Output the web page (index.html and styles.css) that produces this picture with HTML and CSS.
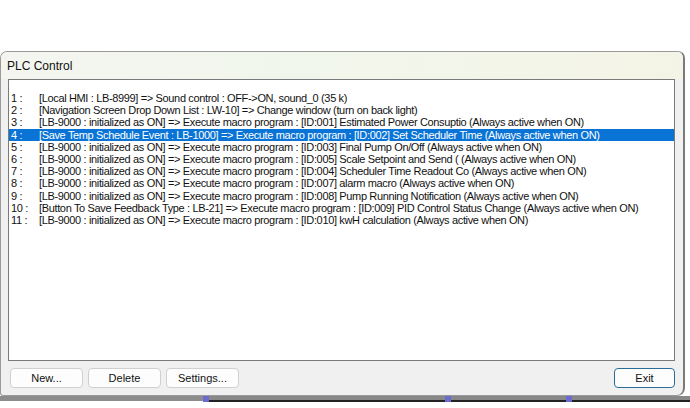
FILE: index.html
```html
<!DOCTYPE html>
<html lang="en">
<head>
  <meta charset="UTF-8" />
  <title>PLC Control</title>
  <link rel="stylesheet" href="styles.css">
</head>
<body>
  <div class="dialog">
    <div class="titlebar">PLC Control</div>
    <div class="content">
      <div class="list">
        <div class="row"><span class="num">1 :</span><span>[Local HMI : LB-8999] =&gt; Sound control : OFF-&gt;ON, sound_0 (35 k)</span></div>
        <div class="row"><span class="num">2 :</span><span>[Navigation Screen Drop Down List : LW-10] =&gt; Change window (turn on back light)</span></div>
        <div class="row"><span class="num">3 :</span><span>[LB-9000 : initialized as ON] =&gt; Execute macro program : [ID:001] Estimated Power Consuptio (Always active when ON)</span></div>
        <div class="row selected"><span class="num">4 :</span><span>[Save Temp Schedule Event : LB-1000] =&gt; Execute macro program : [ID:002] Set Scheduler Time (Always active when ON)</span></div>
        <div class="row"><span class="num">5 :</span><span>[LB-9000 : initialized as ON] =&gt; Execute macro program : [ID:003] Final Pump On/Off (Always active when ON)</span></div>
        <div class="row"><span class="num">6 :</span><span>[LB-9000 : initialized as ON] =&gt; Execute macro program : [ID:005] Scale Setpoint and Send ( (Always active when ON)</span></div>
        <div class="row"><span class="num">7 :</span><span>[LB-9000 : initialized as ON] =&gt; Execute macro program : [ID:004] Scheduler Time Readout Co (Always active when ON)</span></div>
        <div class="row"><span class="num">8 :</span><span>[LB-9000 : initialized as ON] =&gt; Execute macro program : [ID:007] alarm macro (Always active when ON)</span></div>
        <div class="row"><span class="num">9 :</span><span>[LB-9000 : initialized as ON] =&gt; Execute macro program : [ID:008] Pump Running Notification (Always active when ON)</span></div>
        <div class="row"><span class="num">10 :</span><span>[Button To Save Feedback Type : LB-21] =&gt; Execute macro program : [ID:009] PID Control Status Change (Always active when ON)</span></div>
        <div class="row"><span class="num">11 :</span><span>[LB-9000 : initialized as ON] =&gt; Execute macro program : [ID:010] kwH calculation (Always active when ON)</span></div>
      </div>
      <div class="buttons">
        <button>New...</button>
        <button>Delete</button>
        <button>Settings...</button>
        <button class="exit">Exit</button>
      </div>
    </div>
  </div>
  <div class="behind">
    <div class="gray"></div>
    <div class="rail">
      <span class="mark m1"></span>
      <span class="mark m2"></span>
      <span class="mark m3"></span>
    </div>
  </div>
</body>
</html>
```

FILE: styles.css
```css
body {
  margin: 0;
  padding-top: 51px;
  background: #fff;
  font-family: 'Liberation Sans', 'DejaVu Sans', sans-serif;
  width: 690px;
  height: 408px;
  box-sizing: border-box;
  overflow: hidden;
}
.dialog {
  width: 682px;
  height: 343px;
  background: #f0f0f0;
  border: 1px solid #9a9a9a;
  border-right: 2px solid #7a7a7a;
  border-radius: 7px 7px 8px 3px;
  display: flex;
  flex-direction: column;
  overflow: hidden;
}
.titlebar {
  height: 27px;
  display: flex;
  align-items: center;
  padding-left: 6px;
  font-size: 12px;
  color: #111;
  background: linear-gradient(90deg, #f4f5f0, #f1f6ec 40%, #f4f4e6);
}
.content {
  flex: 1;
  padding: 0 8px 0 7px;
  display: flex;
  flex-direction: column;
}
.list {
  height: 282px;
  background: #fff;
  border: 1px solid #7a7a7a;
  padding-top: 12px;
  box-sizing: border-box;
}
.row {
  display: flex;
  height: 12.2px;
  line-height: 12px;
  font-size: 11px;
  letter-spacing: -0.35px;
  color: #111;
  padding-left: 2px;
  white-space: nowrap;
}
.row .num {
  width: 28px;
  flex-shrink: 0;
}
.row.selected {
  background: #0a74d6;
  color: #fff;
}
.buttons {
  display: flex;
  gap: 5px;
  margin-top: 7px;
  padding-left: 2px;
}
.buttons button {
  width: 73px;
  height: 20px;
  padding: 0;
  font-family: inherit;
  font-size: 11px;
  color: #111;
  background: #fdfdfd;
  border: 1px solid #d0d0d0;
  border-radius: 4px;
}
.buttons .exit {
  margin-left: auto;
  width: 61px;
  border-color: #2a6d99;
}
.behind {
  display: flex;
  height: 13px;
}
.gray {
  width: 203px;
  height: 5px;
  background: #8c8c8c;
}
.rail {
  flex: 1;
  position: relative;
  height: 4px;
  background: #888;
  border-bottom: 2px solid #222;
}
.mark {
  position: absolute;
  top: 0;
  width: 6px;
  height: 6px;
  background: #6a6ad0;
}
.m1 { left: 0; }
.m2 { left: 242px; }
.m3 { left: 363px; }
```
